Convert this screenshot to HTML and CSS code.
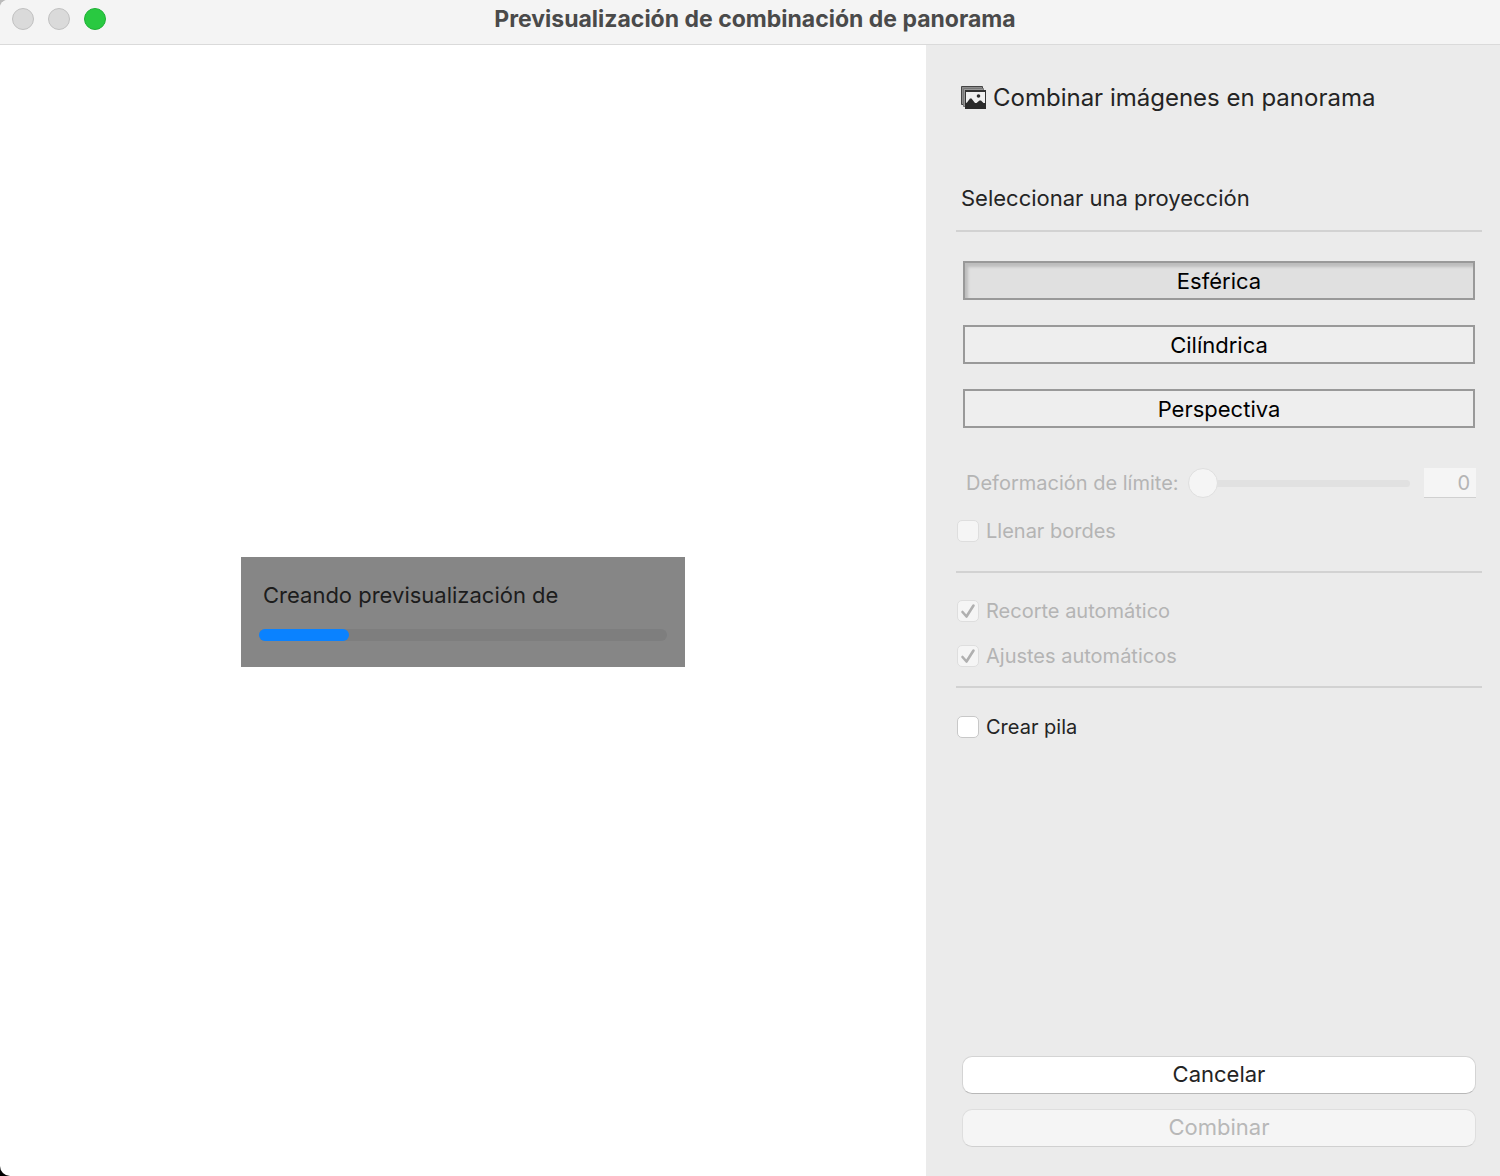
FILE: index.html
```
<!doctype html>
<html lang="es">
<head>
    <meta charset="utf-8">
    <title>Previsualización de combinación de panorama</title>
    <link rel="stylesheet" href="styles.css">
</head>

<body>
    <div class="window">
        <header class="titlebar">
            <div class="lights">
                <button class="light" aria-label="Cerrar" disabled></button>
                <button class="light" aria-label="Minimizar" disabled></button>
                <button class="light zoom" aria-label="Ampliar"></button>
            </div>
            <h1>Previsualización de combinación de panorama</h1>
        </header>

        <div class="content">
            <!-- preview area -->
            <main class="preview">
                <div class="progress-box">
                    <label for="progress">Creando previsualización de</label>
                    <progress id="progress" value="22" max="100"></progress>
                </div>
            </main>

            <!-- options -->
            <form class="sidebar">
                <h2>
                    <svg class="icon" viewBox="0 0 25 24" width="25" height="24">
                        <path fill="#8c8c8c" stroke="#444" d="M.5.5h21v18H.5z"/>
                        <path fill="#999" stroke="#777" d="M2.500 2.500h20v18h-20z"/>
                        <path fill="#333" d="M4 4h21v19H4z"/>
                        <path fill="#f0f0f0" d="M5 6h19v16H5z"/>
                        <circle cx="17.500" cy="10" r="1.800" fill="#2b2b2b"/>
                        <path fill="#2b2b2b" d="M4 17.500l2-1 3-4 1.500 0 3.500 4.500 1.500 0 3-2.500 1.500 0 2.500 2.500H25V23H4z"/>
                    </svg>
                    Combinar imágenes en panorama
                </h2>

                <h3>Seleccionar una proyección</h3>
                <hr>
                <div class="projections">
                    <button type="button" class="projection selected" aria-pressed="true">Esférica</button>
                    <button type="button" class="projection">Cilíndrica</button>
                    <button type="button" class="projection">Perspectiva</button>
                </div>

                <div class="warp">
                    <label for="warp">Deformación de límite:</label>
                    <input type="range" id="warp" min="0" max="100" value="0" disabled>
                    <input type="text" class="warp-value" value="0" aria-label="Valor de deformación" disabled>
                </div>
                <label class="check disabled"><input type="checkbox" disabled>Llenar bordes</label>
                <hr class="low">

                <div class="checks">
                    <label class="check disabled"><input type="checkbox" checked disabled>Recorte automático</label>
                    <label class="check disabled"><input type="checkbox" checked disabled>Ajustes automáticos</label>
                </div>
                <hr>

                <label class="check stack"><input type="checkbox">Crear pila</label>

                <div class="actions">
                    <button type="button" class="action">Cancelar</button>
                    <button type="submit" class="action" disabled>Combinar</button>
                </div>
            </form>
        </div>
    </div>
</body>

</html>
```
FILE: styles.css
```
* {
    box-sizing: border-box;
}

body {
    margin: 0;
    background: linear-gradient(#bbb, #000);
    font-family: Inter, "Liberation Sans", sans-serif;
    color: #242424;
}

button, input {
    font-family: inherit;
    margin: 0;
}

.window {
    display: flex;
    flex-direction: column;
    min-height: 100vh;
    border-radius: 8px 0 0 10px;
    overflow: hidden;
    background: #fff;
}

/* title bar */
.titlebar {
    display: grid;
    grid-template-columns: 105px 1fr 95px;
    align-items: center;
    height: 45px;
    padding-bottom: 7px;
    background: #f4f4f4;
    border-bottom: 1px solid #dadada;
}

.titlebar h1 {
    margin: 0;
    font-size: 23px;
    font-weight: 700;
    line-height: 28px;
    text-align: center;
    color: #4a4a4a;
}

.lights {
    display: flex;
    gap: 14px;
    padding-left: 12px;
}

.light {
    width: 22px;
    height: 22px;
    padding: 0;
    border: 1px solid #c0c0c0;
    border-radius: 50%;
    background: #dadada;
    flex: none;
}

.light.zoom {
    background: #29c941;
    border-color: #1fb036;
}

.content {
    display: grid;
    grid-template-columns: minmax(0, 1fr) 574px;
    flex: 1;
}

/* preview */
.preview {
    display: flex;
    align-items: center;
    justify-content: center;
    padding-top: 2px;
}

.progress-box {
    width: 444px;
    padding: 24px 18px 26px;
    background: #868686;
}

.progress-box label {
    display: block;
    padding-left: 4px;
    margin-bottom: 20px;
    font-size: 22px;
    line-height: 28px;
    color: #1c1c1c;
}

progress {
    display: block;
    width: 100%;
    height: 12px;
    appearance: none;
    border: 0;
}

progress::-webkit-progress-bar {
    background: #7e7e7e;
    border-radius: 6px;
}

progress::-webkit-progress-value {
    background: #0a82ff;
    border-radius: 6px;
}

/* sidebar */
.sidebar {
    display: flex;
    flex-direction: column;
    padding: 38px 18px 29px 30px;
    background: #ebebeb;
}

.sidebar h2 {
    display: flex;
    align-items: center;
    gap: 7px;
    margin: 0 0 71px 5px;
    font-size: 24px;
    font-weight: 400;
    line-height: 30px;
}

.sidebar h3 {
    margin: 0 0 18px 5px;
    font-size: 22px;
    font-weight: 400;
    line-height: 28px;
}

hr {
    width: 100%;
    height: 2px;
    margin: 0;
    border: 0;
    background: #d2d2d2;
}

hr.low {
    margin: 28px 0 26px;
}

.projections {
    display: grid;
    gap: 25px;
    margin: 29px 7px 40px;
}

.projection {
    height: 39px;
    padding: 0;
    border: 2px solid #999;
    background: #eee;
    font-size: 22px;
    color: #000;
}

.projection.selected {
    background: #e0e0e0;
    box-shadow: inset 3px 4px 3px #bdbdbd;
}

.warp {
    display: flex;
    align-items: center;
    height: 30px;
    margin: 0 6px 21px 10px;
    font-size: 20px;
    color: #b4b4b4;
}

.warp input[type=range] {
    flex: 1;
    min-width: 0;
    height: 30px;
    margin: 0 14px 0 9px;
    appearance: none;
    background: none;
}

.warp input[type=range]::-webkit-slider-runnable-track {
    height: 7px;
    border-radius: 4px;
    background: #e1e1e1;
}

.warp input[type=range]::-webkit-slider-thumb {
    appearance: none;
    width: 30px;
    height: 30px;
    margin-top: -12px;
    border: 1px solid #dfdfdf;
    border-radius: 50%;
    background: #f5f5f5;
}

.warp-value {
    width: 52px;
    height: 30px;
    padding: 0 6px;
    border: 0;
    border-bottom: 1px solid #d0d0d0;
    background: #f5f5f5;
    font-size: 20px;
    text-align: right;
    color: #b4b4b4;
}

.check {
    display: flex;
    align-items: center;
    gap: 7px;
    height: 24px;
    padding-left: 1px;
    font-size: 20px;
}

.check.disabled {
    color: #b4b4b4;
}

.check input {
    width: 22px;
    height: 22px;
    appearance: none;
    border: 1px solid #c8c8c8;
    border-radius: 5px;
    background: #fff;
}

.check input:disabled {
    border-color: #dedede;
    background: #f5f5f5;
}

.check input:checked {
    background-image: url("data:image/svg+xml,%3Csvg xmlns='http://www.w3.org/2000/svg' viewBox='0 0 20 20'%3E%3Cpath d='M4.500 11l4 4.500 7-11' fill='none' stroke='%23b0b0b0' stroke-width='2.600' stroke-linecap='round' stroke-linejoin='round'/%3E%3C/svg%3E");
}

.checks {
    display: grid;
    gap: 21px;
    margin-bottom: 18px;
}

.check.stack {
    margin-top: 27px;
}

/* bottom buttons */
.actions {
    display: grid;
    gap: 15px;
    margin: auto 6px 0;
}

.action {
    height: 38px;
    padding: 0 0 3px;
    border: 1px solid #d4d4d4;
    border-bottom-color: #b8b8b8;
    border-radius: 10px;
    background: #fff;
    font-size: 22px;
    color: #242424;
}

.action:disabled {
    border-color: #dedede;
    border-bottom-color: #d0d0d0;
    background: #f5f5f5;
    color: #b8b8b8;
}
```
